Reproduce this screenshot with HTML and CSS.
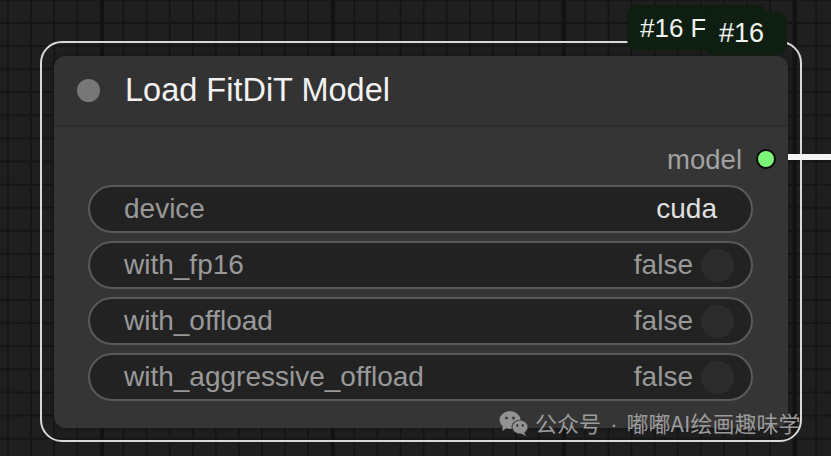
FILE: index.html
```html
<!DOCTYPE html>
<html>
<head>
<meta charset="utf-8">
<link rel="stylesheet" href="styles.css">
</head>
<body>
<div class="canvas">
  <div class="selection">
    <div class="node">
      <div class="title">
        <span class="title-dot"></span>
        <span class="title-text">Load FitDiT Model</span>
      </div>
      <div class="body">
        <div class="output">
          <span class="output-label">model</span>
          <span class="output-dot"></span>
        </div>
        <div class="widget">
          <span class="w-label">device</span>
          <span class="w-value bright">cuda</span>
        </div>
        <div class="widget toggle-row">
          <span class="w-label">with_fp16</span>
          <span class="w-value">false</span>
          <span class="knob"></span>
        </div>
        <div class="widget toggle-row">
          <span class="w-label">with_offload</span>
          <span class="w-value">false</span>
          <span class="knob"></span>
        </div>
        <div class="widget toggle-row">
          <span class="w-label">with_aggressive_offload</span>
          <span class="w-value">false</span>
          <span class="knob"></span>
        </div>
      </div>
    </div>
  </div>
  <div class="link"></div>
  <div class="badge badge-back">#16 FitDiT</div>
  <div class="badge badge-front">#16</div>
  <div class="watermark">
    <svg class="wx" viewBox="0 0 30 26" width="30" height="26">
      <ellipse cx="11" cy="10" rx="10.5" ry="9" fill="#9a9a9a"/>
      <path d="M4 16 L3 21 L8 18 Z" fill="#9a9a9a"/>
      <circle cx="7.5" cy="8" r="1.5" fill="#3a3a3a"/>
      <circle cx="14.5" cy="8" r="1.5" fill="#3a3a3a"/>
      <ellipse cx="21" cy="17" rx="8.5" ry="7.3" fill="#3a3a3a"/>
      <ellipse cx="21" cy="17" rx="7.5" ry="6.5" fill="#9a9a9a"/>
      <path d="M25 22 L27 26 L22 23.5 Z" fill="#9a9a9a"/>
      <circle cx="18.2" cy="15.5" r="1.2" fill="#3a3a3a"/>
      <circle cx="23.8" cy="15.5" r="1.2" fill="#3a3a3a"/>
    </svg>
    <span>公众号<span class="sep"> · </span>嘟嘟AI绘画趣味学</span>
  </div>
</div>
</body>
</html>
```

FILE: styles.css
```css
* { box-sizing: border-box; }
html, body { margin: 0; padding: 0; }
body {
  font-family: "Liberation Sans", Arial, sans-serif;
  background: #1f1f20;
}
.canvas {
  position: relative;
  width: 831px;
  height: 456px;
  overflow: hidden;
  background-color: #1f1f20;
  background-image:
    linear-gradient(to right, #121213 3px, transparent 3px),
    linear-gradient(to right, #151516 2px, transparent 2px),
    linear-gradient(to bottom, #151516 2px, transparent 2px);
  background-size: 231px 231px, 23.1px 23.1px, 23.1px 23.1px;
  background-position: 101px 0, 7px 0, 0 22px;
  padding: 41px 0 0 40px;
}
.selection {
  width: 762px;
  height: 401px;
  border: 2px solid #d9d9d9;
  border-radius: 22px;
  padding: 13px 12px 12px 12px;
}
.node {
  height: 372px;
  background: #353535;
  border-radius: 12px;
  box-shadow: 0 0 6px rgba(0,0,0,0.35);
  overflow: hidden;
}
.title {
  height: 71px;
  display: flex;
  align-items: center;
  padding-left: 23px;
  background: #333333;
  border-bottom: 2px solid #2c2c2c;
}
.title-dot {
  width: 23px;
  height: 23px;
  border-radius: 50%;
  background: #777777;
  flex: none;
}
.title-text {
  margin-left: 25px;
  font-size: 32.5px;
  color: #f2f2f2;
  line-height: 1;
}
.body {
  padding: 17px 35px 0 34px;
  display: flex;
  flex-direction: column;
  gap: 8px;
}
.output {
  height: 32px;
  display: flex;
  align-items: center;
  justify-content: flex-end;
  margin-right: -23px;
  margin-bottom: 1px;
}
.output-label {
  font-size: 27.5px;
  color: #a2a2a2;
  line-height: 1;
}
.output-dot {
  width: 20px;
  height: 20px;
  border-radius: 50%;
  background: #7cf47a;
  border: 2px solid #0a0a0a;
  margin-left: 14px;
  margin-top: -3px;
}
.widget {
  height: 48px;
  border: 2px solid #5a5a5a;
  border-radius: 24px;
  background: #222222;
  display: flex;
  align-items: center;
  padding: 0 34px 0 34px;
  font-size: 28px;
  line-height: 1;
}
.toggle-row { padding-right: 17px; }
.w-label {
  color: #999999;
  flex: 1;
}
.w-value { color: #999999; }
.w-value.bright { color: #e0e0e0; }
.knob {
  width: 33px;
  height: 33px;
  border-radius: 50%;
  background: #2c2c2c;
  margin-left: 8px;
  flex: none;
}
.link {
  position: absolute;
  left: 788px;
  top: 154px;
  width: 50px;
  height: 6px;
  background: #f4f4f4;
}
.badge {
  position: absolute;
  background: #0e1f11;
  color: #f2f2f2;
  font-size: 26px;
  border-radius: 10px;
  white-space: nowrap;
  overflow: hidden;
  line-height: 1;
}
.badge-back {
  left: 627px;
  top: 5px;
  width: 140px;
  height: 45px;
  padding: 10px 0 0 13px;
}
.badge-front {
  left: 705px;
  top: 12px;
  width: 82px;
  height: 43px;
  padding: 8px 0 0 14px;
  font-size: 27px;
}
.watermark {
  position: absolute;
  left: 499px;
  top: 410px;
  display: flex;
  align-items: center;
  gap: 6px;
  color: #a5a5a5;
  font-size: 22px;
  font-family: "Noto Sans CJK SC", "Liberation Sans", sans-serif;
  line-height: 1;
  opacity: 0.92;
}
.sep {
  font-family: "Liberation Sans", sans-serif;
  padding: 0 3px;
}
.wx { flex: none; }
```
